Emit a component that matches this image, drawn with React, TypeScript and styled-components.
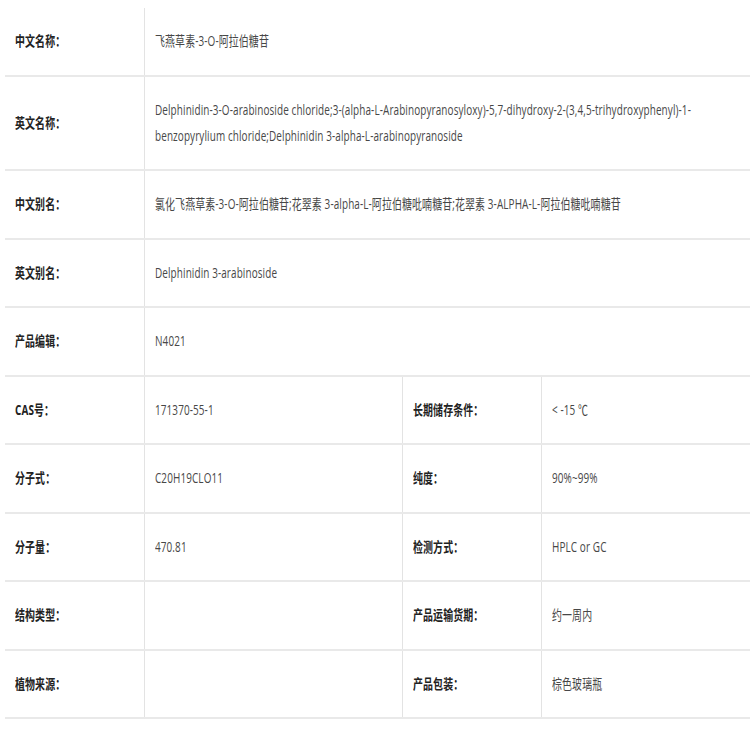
import React from "react";
import styled, { createGlobalStyle } from "styled-components";

const Global = createGlobalStyle`
  html, body { margin: 0; padding: 0; background: #ffffff; }
  body { font-family: "Open Sans", "Noto Sans CJK SC", sans-serif; }
`;

const Page = styled.div`
  padding: 8px 0 0 5px;
  width: 745px;
`;

const Table = styled.div`
  width: 745px;
  border-right: 1px solid #f2f2f2;
`;

const Row = styled.div<{ $split?: boolean }>`
  display: grid;
  grid-template-columns: ${(p) => (p.$split ? "139px 257.7px 139px 1fr" : "139px 1fr")};
  border-bottom: 2px solid #e9e9e9;
`;

const Cell = styled.div<{ $label?: boolean; $divider?: boolean }>`
  display: flex;
  align-items: center;
  min-width: 0;
  padding: 20.25px 10px;
  border-left: ${(p) => (p.$divider ? "1px solid #e3e3e3" : "none")};
  font-size: 14px;
  line-height: 26px;
  letter-spacing: 0.15px;
  font-weight: ${(p) => (p.$label ? 700 : 400)};
  color: ${(p) => (p.$label ? "#222222" : "#474747")};
`;

const Squeeze = styled.span`
  display: block;
  flex-shrink: 0;
  width: calc(100% / 0.71);
  transform: scaleX(0.71);
  transform-origin: left center;
  word-break: normal;
`;

type Pair = [string, string];

const wideRows: Pair[] = [
  ["中文名称：", "飞燕草素-3-O-阿拉伯糖苷"],
  [
    "英文名称：",
    "Delphinidin-3-O-arabinoside chloride;3-(alpha-L-Arabinopyranosyloxy)-5,7-dihydroxy-2-(3,4,5-trihydroxyphenyl)-1-benzopyrylium chloride;Delphinidin 3-alpha-L-arabinopyranoside",
  ],
  ["中文别名：", "氯化飞燕草素-3-O-阿拉伯糖苷;花翠素 3-alpha-L-阿拉伯糖吡喃糖苷;花翠素 3-ALPHA-L-阿拉伯糖吡喃糖苷"],
  ["英文别名：", "Delphinidin 3-arabinoside"],
  ["产品编辑：", "N4021"],
];

const splitRows: [Pair, Pair][] = [
  [["CAS号：", "171370-55-1"], ["长期储存条件：", "< -15 ℃"]],
  [["分子式：", "C20H19CLO11"], ["纯度：", "90%~99%"]],
  [["分子量：", "470.81"], ["检测方式：", "HPLC or GC"]],
  [["结构类型：", ""], ["产品运输货期：", "约一周内"]],
  [["植物来源：", ""], ["产品包装：", "棕色玻璃瓶"]],
];

export default function App() {
  return (
    <>
      <Global />
      <Page>
        <Table>
          {wideRows.map(([k, v]) => (
            <Row key={k}>
              <Cell $label>
                <Squeeze>{k}</Squeeze>
              </Cell>
              <Cell $divider>
                <Squeeze>{v}</Squeeze>
              </Cell>
            </Row>
          ))}
          {splitRows.map(([a, b]) => (
            <Row key={a[0]} $split>
              <Cell $label>
                <Squeeze>{a[0]}</Squeeze>
              </Cell>
              <Cell $divider>
                <Squeeze>{a[1]}</Squeeze>
              </Cell>
              <Cell $label $divider>
                <Squeeze>{b[0]}</Squeeze>
              </Cell>
              <Cell $divider>
                <Squeeze>{b[1]}</Squeeze>
              </Cell>
            </Row>
          ))}
        </Table>
      </Page>
    </>
  );
}
